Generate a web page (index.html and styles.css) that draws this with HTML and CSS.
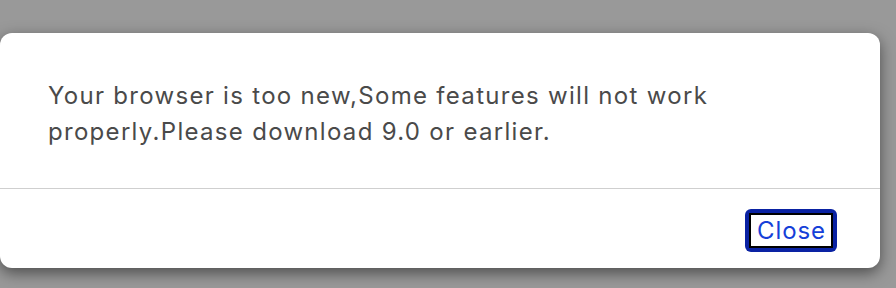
FILE: index.html
```html
<!DOCTYPE html>
<html>
<head>
<meta charset="utf-8">
<link rel="stylesheet" href="styles.css">
</head>
<body>
<div class="dialog">
  <div class="dialog-body">Your browser is too new,Some features will not work properly.Please download 9.0 or earlier.</div>
  <div class="dialog-footer">
    <span class="focus-ring"><button class="close-btn">Close</button></span>
  </div>
</div>
</body>
</html>
```
FILE: styles.css
```css
html, body {
  margin: 0;
  padding: 0;
  height: 100%;
}
body {
  background: #999999;
  font-family: Inter, "Liberation Sans", sans-serif;
  overflow: hidden;
}
.dialog {
  margin-top: 33px;
  width: 880px;
  background: #ffffff;
  border-radius: 12px;
  box-shadow: 0 5px 15px rgba(0, 0, 0, 0.5);
}
.dialog-body {
  padding: 45px 140px 38px 48px;
  font-size: 24px;
  line-height: 36px;
  letter-spacing: 1.3px;
  color: #4a4a4a;
}
.dialog-footer {
  border-top: 1px solid #cfcfcf;
  height: 79px;
  display: flex;
  align-items: center;
  justify-content: flex-end;
  padding-right: 43px;
}
.focus-ring {
  display: inline-flex;
  padding: 4px;
  background: #0a22a3;
  border-radius: 6px;
  margin-top: 3px;
}
.close-btn {
  font-family: Inter, "Liberation Sans", sans-serif;
  font-size: 24px;
  line-height: 31px;
  letter-spacing: 0.9px;
  color: #1540d8;
  background: #ffffff;
  border: 2px solid #000000;
  padding: 0 5px 0 6px;
  margin: 0;
  cursor: pointer;
}
```
